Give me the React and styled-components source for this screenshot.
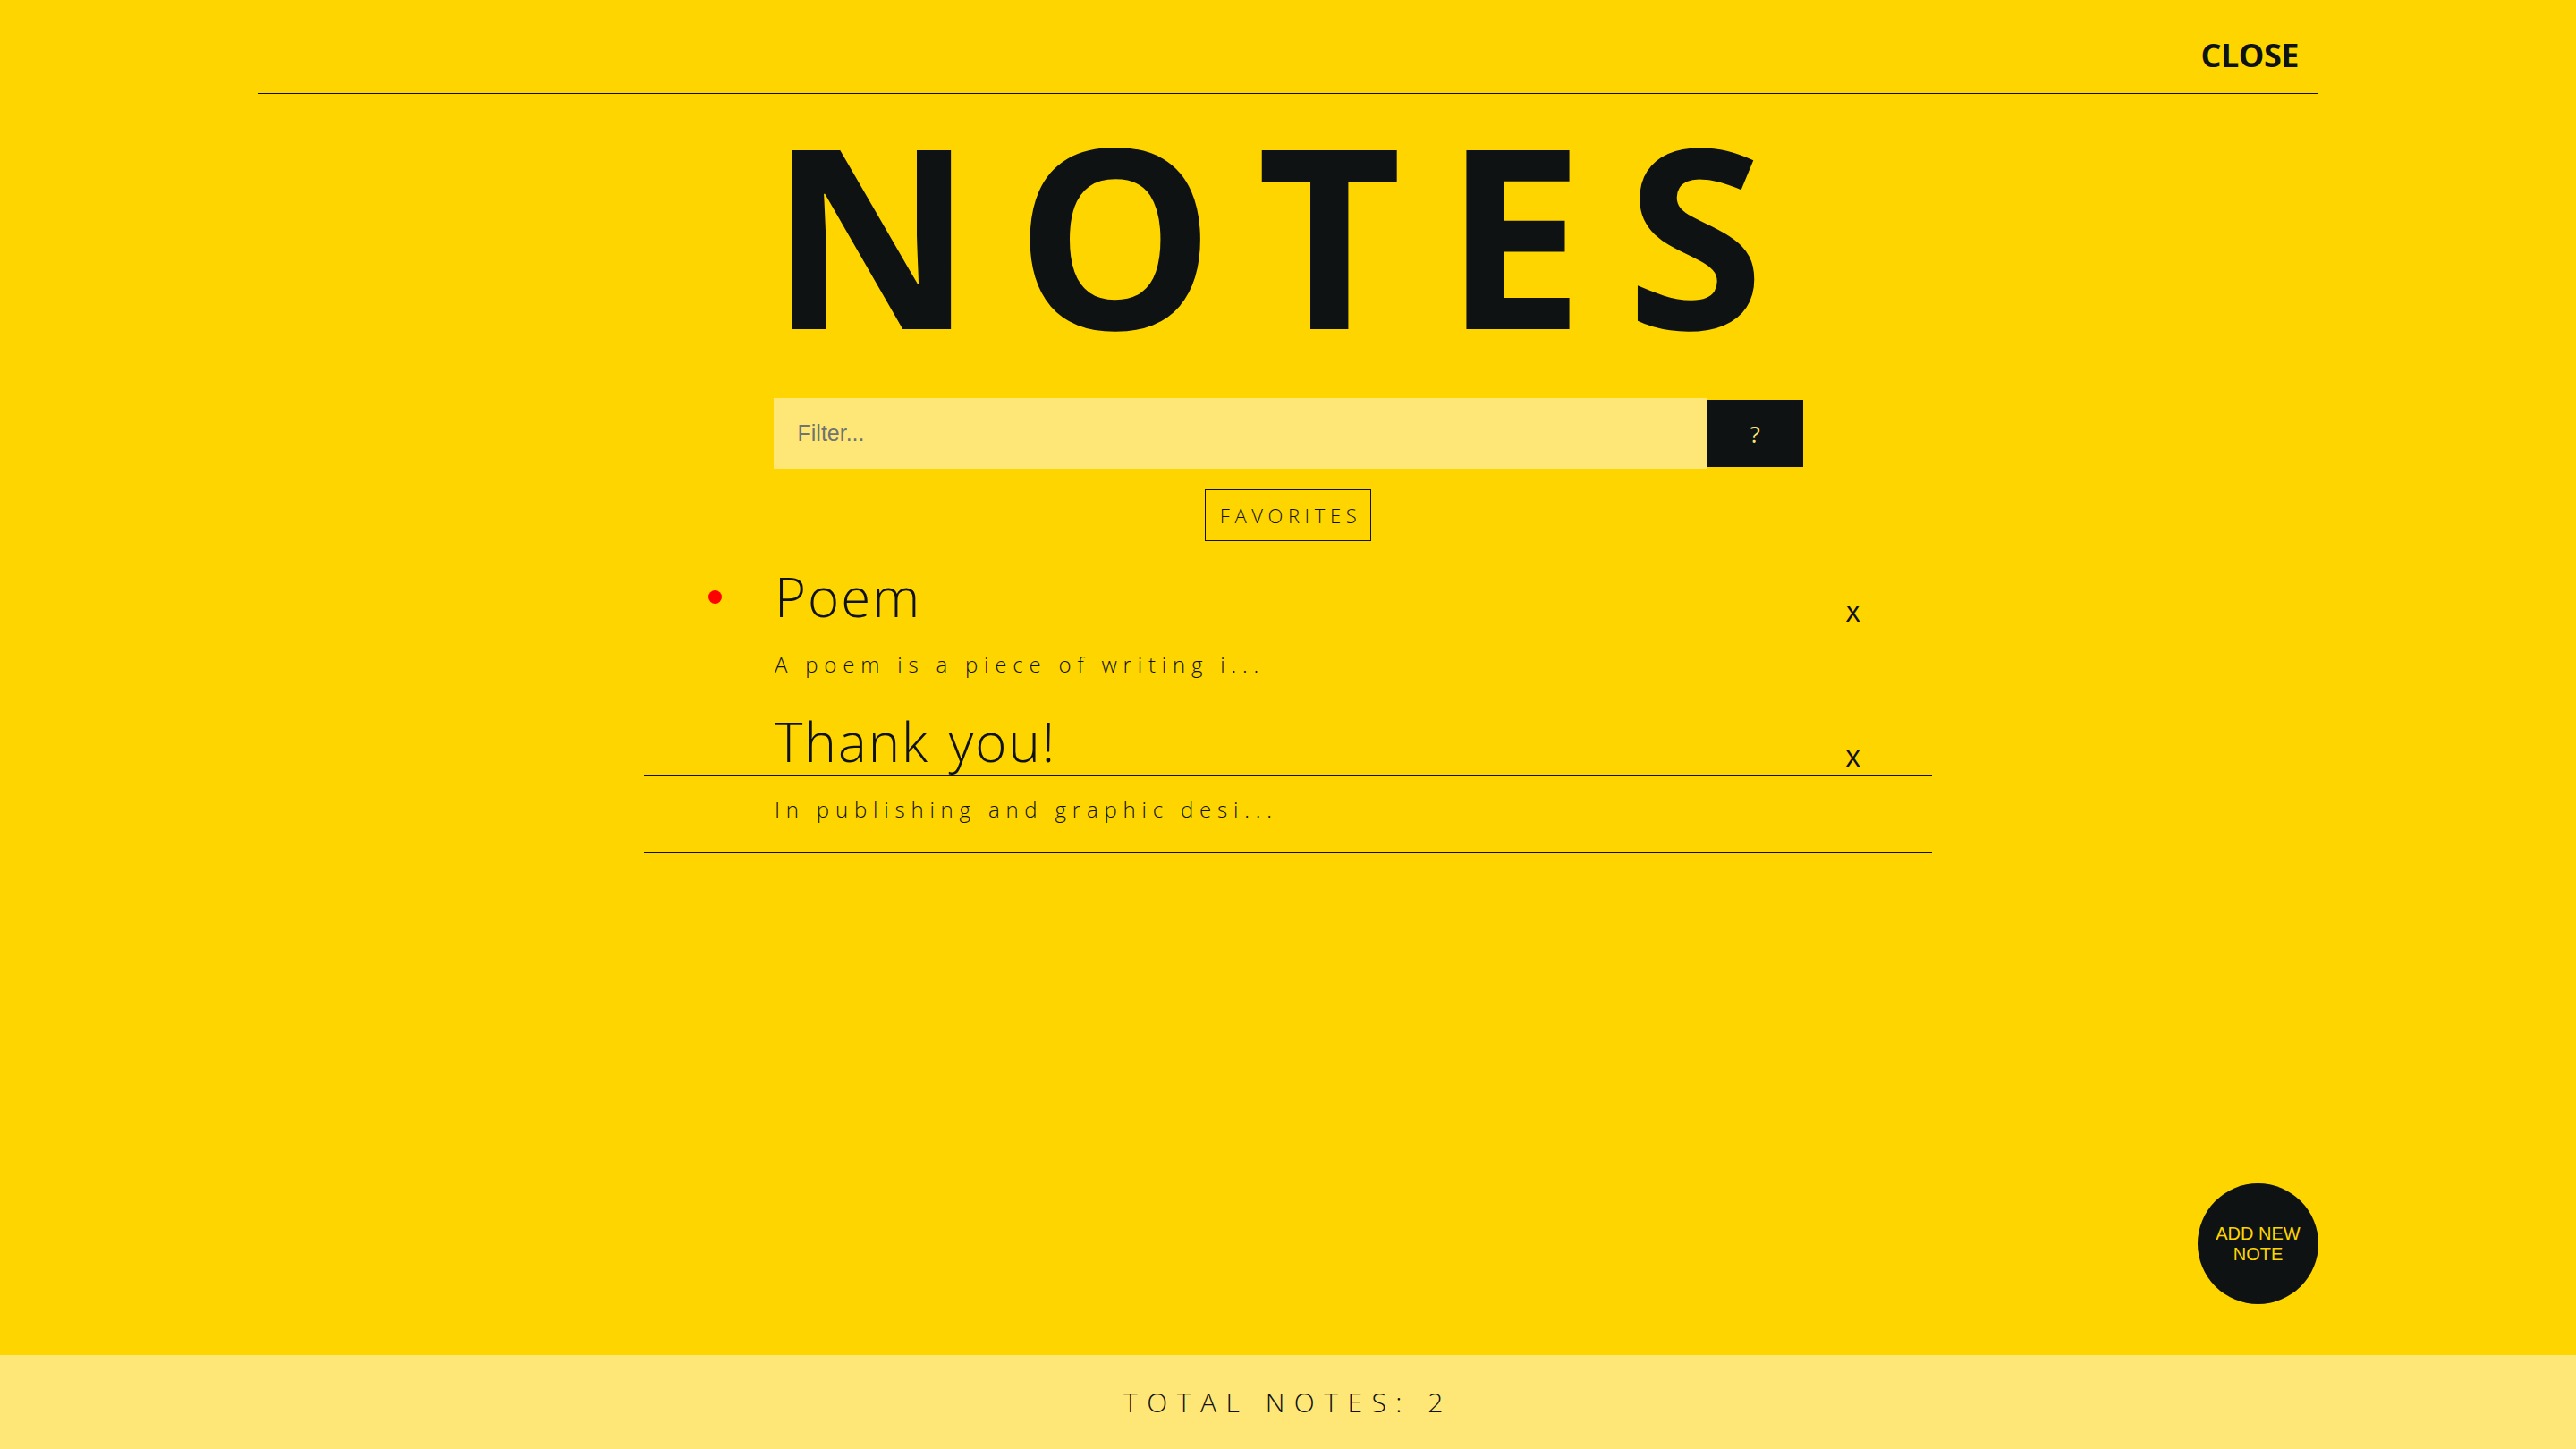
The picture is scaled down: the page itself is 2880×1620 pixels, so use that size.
import React, { useState } from "react";
import styled, { createGlobalStyle } from "styled-components";

const YELLOW = "#ffd500";
const LIGHT = "#ffe777";
const DARK = "#0e1213";

const GlobalStyle = createGlobalStyle`
  html, body {
    margin: 0;
    padding: 0;
    background: ${YELLOW};
    color: ${DARK};
    font-family: "Open Sans", "DejaVu Sans", sans-serif;
  }
  * { box-sizing: border-box; }
`;

const Page = styled.div`
  position: relative;
  min-height: 100vh;
  display: flex;
  flex-direction: column;
`;

const Main = styled.main`
  flex: 1;
  display: flex;
  flex-direction: column;
  align-items: center;
`;

const Header = styled.header`
  width: 80%;
  display: flex;
  justify-content: flex-end;
  padding: 37px 22px 18px;
  border-bottom: 1px solid ${DARK};
`;

const CloseButton = styled.button`
  background: none;
  border: none;
  padding: 0;
  font-family: "Open Sans", sans-serif;
  font-weight: 700;
  font-size: 36px;
  line-height: 49px;
  letter-spacing: -0.5px;
  color: ${DARK};
  cursor: pointer;
`;

const Title = styled.h1`
  margin: 15px 0 0;
  font-family: "Open Sans", sans-serif;
  font-weight: 700;
  font-size: 280px;
  line-height: 280px;
  letter-spacing: 47px;
  color: ${DARK};
`;

const FilterGroup = styled.div`
  width: 1151px;
  margin-top: 45px;
  display: flex;
  align-items: center;
`;

const FilterInput = styled.input`
  flex: 1;
  height: 79px;
  border: none;
  outline: none;
  background: ${LIGHT};
  padding: 0 27px;
  font-family: "Liberation Sans", Arial, sans-serif;
  font-size: 25px;
  color: ${DARK};
  &::placeholder {
    color: #6f7470;
  }
`;

const HelpButton = styled.button`
  width: 107px;
  height: 75px;
  border: none;
  background: ${DARK};
  color: ${LIGHT};
  font-family: "Open Sans", sans-serif;
  font-size: 26px;
  cursor: pointer;
`;

const FavoritesButton = styled.button`
  margin-top: 23px;
  background: none;
  border: 1px solid ${DARK};
  padding: 13px 10px 13px 16px;
  font-family: "Open Sans", sans-serif;
  font-weight: 300;
  font-size: 22px;
  line-height: 30px;
  letter-spacing: 5.6px;
  color: ${DARK};
  cursor: pointer;
`;

const NoteList = styled.ul`
  list-style: none;
  margin: 25px 0 0;
  padding: 0;
  width: 1440px;
`;

const NoteItem = styled.li`
  display: flex;
  flex-direction: column;
`;

const TitleRow = styled.div`
  display: flex;
  align-items: center;
  height: 76px;
  border-bottom: 1px solid ${DARK};
`;

const Marker = styled.span`
  flex: none;
  width: 15px;
  height: 15px;
  border-radius: 50%;
  margin: 0 59px 0 72px;
  background: ${(p) => (p.$on ? "#ff0000" : "transparent")};
`;

const NoteTitle = styled.h2`
  flex: 1;
  margin: 0;
  font-family: "Open Sans", sans-serif;
  font-weight: 300;
  font-size: 60px;
  line-height: 75px;
  letter-spacing: 2px;
  word-spacing: 4px;
  color: ${DARK};
`;

const DeleteButton = styled.button`
  align-self: flex-end;
  margin: 0 80px 6px 0;
  background: none;
  border: none;
  padding: 0;
  font-family: "Open Sans", sans-serif;
  font-size: 32px;
  line-height: 32px;
  color: ${DARK};
  cursor: pointer;
`;

const NoteBody = styled.p`
  margin: 0;
  padding: 20px 0 32px 146px;
  border-bottom: 1px solid ${DARK};
  font-family: "Open Sans", sans-serif;
  font-weight: 300;
  font-size: 24px;
  line-height: 33px;
  letter-spacing: 6.8px;
  color: ${DARK};
`;

const AddButton = styled.button`
  position: absolute;
  right: 288px;
  bottom: 162px;
  width: 135px;
  height: 135px;
  border-radius: 50%;
  border: none;
  background: ${DARK};
  color: ${YELLOW};
  font-family: "Liberation Sans", Arial, sans-serif;
  font-size: 20px;
  line-height: 23px;
  padding: 0 18px;
  cursor: pointer;
`;

const Footer = styled.footer`
  height: 105px;
  background: ${LIGHT};
  text-align: center;
  font-family: "Open Sans", sans-serif;
  font-weight: 300;
  font-size: 30px;
  line-height: 105px;
  letter-spacing: 10.5px;
  color: ${DARK};
`;

const notes = [
  {
    id: 1,
    title: "Poem",
    body: "A poem is a piece of writing in which the words are arranged in separate lines.",
    favorite: true,
  },
  {
    id: 2,
    title: "Thank you!",
    body: "In publishing and graphic design, Lorem ipsum is a placeholder text.",
    favorite: false,
  },
];

const preview = (text) => (text.length > 30 ? text.slice(0, 30) + "..." : text);

export default function App() {
  const [filter, setFilter] = useState("");
  const shown = notes.filter((n) =>
    n.title.toLowerCase().includes(filter.toLowerCase())
  );
  return (
    <Page>
      <GlobalStyle />
      <Main>
        <Header>
          <CloseButton>CLOSE</CloseButton>
        </Header>
        <Title>NOTES</Title>
        <FilterGroup>
          <FilterInput
            placeholder="Filter..."
            value={filter}
            onChange={(e) => setFilter(e.target.value)}
          />
          <HelpButton>?</HelpButton>
        </FilterGroup>
        <FavoritesButton>FAVORITES</FavoritesButton>
        <NoteList>
          {shown.map((n) => (
            <NoteItem key={n.id}>
              <TitleRow>
                <Marker $on={n.favorite} />
                <NoteTitle>{n.title}</NoteTitle>
                <DeleteButton>x</DeleteButton>
              </TitleRow>
              <NoteBody>{preview(n.body)}</NoteBody>
            </NoteItem>
          ))}
        </NoteList>
      </Main>
      <AddButton>ADD NEW NOTE</AddButton>
      <Footer>TOTAL NOTES: {notes.length}</Footer>
    </Page>
  );
}
